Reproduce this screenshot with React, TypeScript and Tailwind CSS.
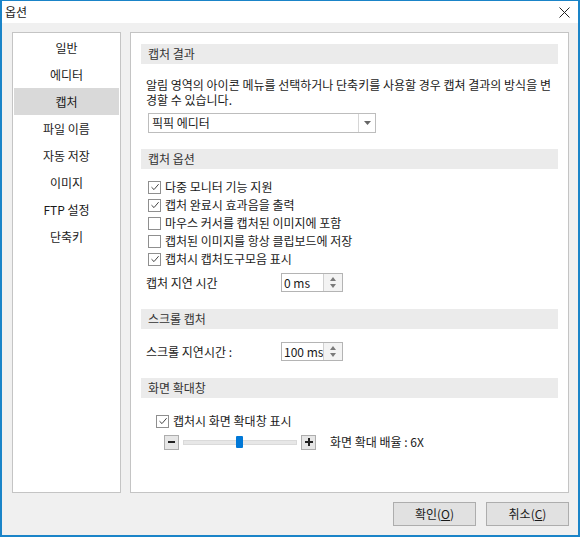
import React from "react";

const navItems = ["일반", "에디터", "캡처", "파일 이름", "자동 저장", "이미지", "FTP 설정", "단축키"];

const captureOptions = [
  { label: "다중 모니터 기능 지원", checked: true },
  { label: "캡처 완료시 효과음을 출력", checked: true },
  { label: "마우스 커서를 캡처된 이미지에 포함", checked: false },
  { label: "캡처된 이미지를 항상 클립보드에 저장", checked: false },
  { label: "캡처시 캡처도구모음 표시", checked: true },
];

function Check({ checked }: { checked: boolean }) {
  return (
    <span className="w-[13px] h-[13px] border border-[#8f8f8f] bg-white flex items-center justify-center shrink-0">
      {checked && (
        <svg width="10" height="10" viewBox="0 0 10 10">
          <path d="M1.5 5.2 L4 7.6 L8.6 2.2" fill="none" stroke="#444" strokeWidth="1" />
        </svg>
      )}
    </span>
  );
}

function Header({ title }: { title: string }) {
  return (
    <div className="h-[20px] bg-[#ebebeb] flex items-center pl-[7px] text-[#333]">{title}</div>
  );
}

function Spinner({ value }: { value: string }) {
  return (
    <div className="w-[62px] h-[19px] border border-[#b4b4b4] bg-white flex">
      <div className="flex-1 pl-[2px] flex items-center whitespace-nowrap">{value}</div>
      <div className="w-[19px] border-l border-[#d0d0d0] bg-[#f3f3f3] flex flex-col items-center justify-center gap-[3px]">
        <svg width="6" height="4" viewBox="0 0 6 4">
          <path d="M0 4 L3 0 L6 4 Z" fill="#7a7a7a" />
        </svg>
        <svg width="6" height="4" viewBox="0 0 6 4">
          <path d="M0 0 L3 4 L6 0 Z" fill="#7a7a7a" />
        </svg>
      </div>
    </div>
  );
}

export default function App() {
  return (
    <div
      className="w-[580px] h-[537px] bg-[#f0f0f0] border-x-2 border-b-2 border-t border-[#1a84c8] flex flex-col text-[12px] text-[#1a1a1a]"
      style={{ fontFamily: '"Noto Sans CJK KR", "Noto Sans", sans-serif' }}
    >
      <div className="h-[22px] bg-white flex items-center justify-between pl-[3px] pr-[8px] shrink-0">
        <span>옵션</span>
        <svg width="11" height="11" viewBox="0 0 11 11">
          <path d="M0.5 0.5 L10.5 10.5 M10.5 0.5 L0.5 10.5" stroke="#222" strokeWidth="1" />
        </svg>
      </div>

      <div className="flex-1 flex flex-col pl-[10px] pr-[9px] pt-[9px]">
        <div className="flex gap-[9px] h-[461px]">
          <div className="w-[109px] bg-white border border-[#c4c4c4] p-[1px] flex flex-col">
            {navItems.map((item) => (
              <div
                key={item}
                className={
                  "h-[27px] flex items-center justify-center " +
                  (item === "캡처" ? "bg-[#d9d9d9]" : "")
                }
              >
                {item}
              </div>
            ))}
          </div>

          <div className="flex-1 bg-white border border-[#c4c4c4] px-[10px] flex flex-col">
            <div className="mt-[11px]">
              <Header title="캡처 결과" />
            </div>
            <div className="mt-[13px] pl-[5px] leading-[15px] whitespace-nowrap flex flex-col">
              <span>알림 영역의 아이콘 메뉴를 선택하거나 단축키를 사용할 경우 캡쳐 결과의 방식을 변</span>
              <span>경할 수 있습니다.</span>
            </div>
            <div className="mt-[6px] ml-[7px] w-[228px] h-[20px] border border-[#bdbdbd] bg-white flex">
              <div className="flex-1 pl-[3px] flex items-center">픽픽 에디터</div>
              <div className="w-[17px] border-l border-[#d6d6d6] flex items-center justify-center">
                <svg width="7" height="4" viewBox="0 0 7 4">
                  <path d="M0 0 L7 0 L3.5 4 Z" fill="#666" />
                </svg>
              </div>
            </div>

            <div className="mt-[16px]">
              <Header title="캡처 옵션" />
            </div>
            <div className="mt-[9px] flex flex-col pl-[7px]">
              {captureOptions.map((o) => (
                <div key={o.label} className="h-[18px] flex items-center gap-[4px]">
                  <Check checked={o.checked} />
                  <span>{o.label}</span>
                </div>
              ))}
            </div>
            <div className="mt-[5px] flex items-center pl-[5px] h-[19px]">
              <span className="w-[135px]">캡처 지연 시간</span>
              <Spinner value="0 ms" />
            </div>

            <div className="mt-[17px]">
              <Header title="스크롤 캡처" />
            </div>
            <div className="mt-[13px] flex items-center pl-[5px] h-[19px]">
              <span className="w-[135px]">스크롤 지연시간 :</span>
              <Spinner value="100 ms" />
            </div>

            <div className="mt-[17px]">
              <Header title="화면 확대창" />
            </div>
            <div className="mt-[14px] pl-[15px] h-[18px] flex items-center gap-[4px]">
              <Check checked={true} />
              <span>캡처시 화면 확대창 표시</span>
            </div>
            <div className="mt-[4px] pl-[23px] h-[16px] flex items-center">
              <div className="w-[15px] h-[15px] bg-[#e6e6e6] border border-[#adadad] flex items-center justify-center">
                <span className="w-[7px] h-[2px] bg-[#222]" />
              </div>
              <div className="ml-[4px] w-[114px] h-[16px] relative flex items-center">
                <div className="w-full h-[5px] bg-[#e7e7e7] border border-[#dadada]" />
                <div className="absolute left-[53px] top-[2px] w-[7px] h-[12px] bg-[#0078d7] rounded-[1px]" />
              </div>
              <div className="ml-[4px] w-[15px] h-[15px] bg-[#e6e6e6] border border-[#adadad] flex items-center justify-center">
                <svg width="8" height="8" viewBox="0 0 8 8">
                  <path d="M4 0 V8 M0 4 H8" stroke="#222" strokeWidth="2" />
                </svg>
              </div>
              <span className="ml-[14px]">화면 확대 배율 : 6X</span>
            </div>
          </div>
        </div>

        <div className="flex justify-end gap-[10px] mt-[9px]">
          <button className="w-[83px] h-[24px] bg-[#e1e1e1] border border-[#adadad] flex items-center justify-center">
            확인(<span className="underline">O</span>)
          </button>
          <button className="w-[83px] h-[24px] bg-[#e1e1e1] border border-[#adadad] flex items-center justify-center">
            취소(<span className="underline">C</span>)
          </button>
        </div>
      </div>
    </div>
  );
}
